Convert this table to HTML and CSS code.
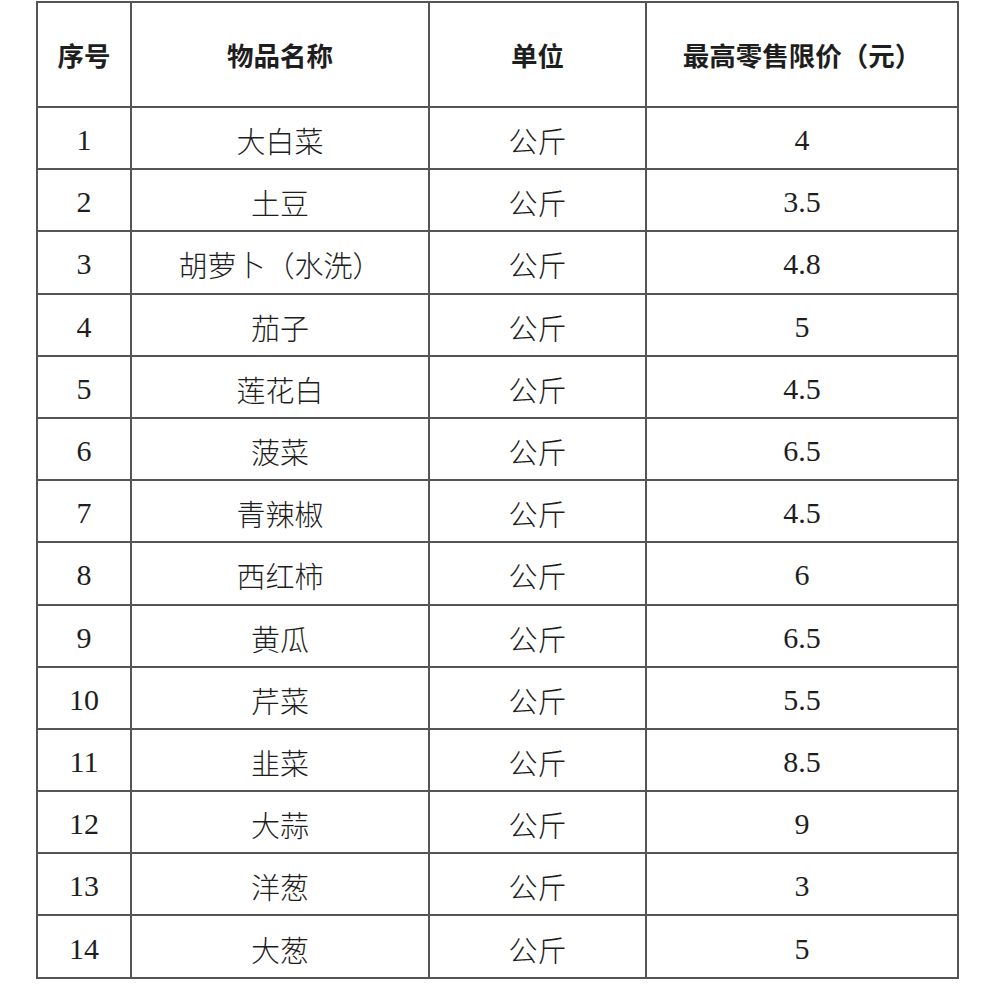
FILE: index.html
```html
<!DOCTYPE html>
<html lang="zh">
<head>
<meta charset="utf-8">
<link rel="stylesheet" href="styles.css">
</head>
<body>
<table class="price-table">
  <colgroup>
    <col class="c-no"><col class="c-name"><col class="c-unit"><col class="c-price">
  </colgroup>
  <thead>
    <tr class="head"><th>序号</th><th>物品名称</th><th>单位</th><th>最高零售限价（元）</th></tr>
  </thead>
  <tbody>
    <tr><td class="num">1</td><td>大白菜</td><td>公斤</td><td class="num">4</td></tr>
    <tr><td class="num">2</td><td>土豆</td><td>公斤</td><td class="num">3.5</td></tr>
    <tr><td class="num">3</td><td>胡萝卜（水洗）</td><td>公斤</td><td class="num">4.8</td></tr>
    <tr><td class="num">4</td><td>茄子</td><td>公斤</td><td class="num">5</td></tr>
    <tr><td class="num">5</td><td>莲花白</td><td>公斤</td><td class="num">4.5</td></tr>
    <tr><td class="num">6</td><td>菠菜</td><td>公斤</td><td class="num">6.5</td></tr>
    <tr><td class="num">7</td><td>青辣椒</td><td>公斤</td><td class="num">4.5</td></tr>
    <tr><td class="num">8</td><td>西红柿</td><td>公斤</td><td class="num">6</td></tr>
    <tr><td class="num">9</td><td>黄瓜</td><td>公斤</td><td class="num">6.5</td></tr>
    <tr><td class="num">10</td><td>芹菜</td><td>公斤</td><td class="num">5.5</td></tr>
    <tr><td class="num">11</td><td>韭菜</td><td>公斤</td><td class="num">8.5</td></tr>
    <tr><td class="num">12</td><td>大蒜</td><td>公斤</td><td class="num">9</td></tr>
    <tr><td class="num">13</td><td>洋葱</td><td>公斤</td><td class="num">3</td></tr>
    <tr><td class="num">14</td><td>大葱</td><td>公斤</td><td class="num">5</td></tr>
  </tbody>
</table>
</body>
</html>
```
FILE: styles.css
```css
html, body {
  margin: 0;
  padding: 0;
  background: #fff;
}
body {
  padding: 1px 0 0 36px;
}
.price-table {
  border-collapse: collapse;
  width: 921px;
  table-layout: fixed;
  color: #1e1e1e;
  font-family: "Noto Sans CJK SC", sans-serif;
}
.c-no { width: 94px; }
.c-name { width: 298px; }
.c-unit { width: 217px; }
.c-price { width: 312px; }
.price-table th,
.price-table td {
  border: 2px solid #555;
  text-align: center;
  vertical-align: middle;
  padding: 0;
}
.price-table tr.head th {
  height: 103px;
  font-size: 26.5px;
  font-weight: 700;
}
.price-table tbody td {
  height: 56.2px;
  font-size: 29px;
  font-weight: 300;
  padding-top: 4px;
}
.price-table tbody td.num {
  font-family: "Liberation Serif", "Times New Roman", serif;
  font-size: 30px;
  font-weight: 400;
}
```
